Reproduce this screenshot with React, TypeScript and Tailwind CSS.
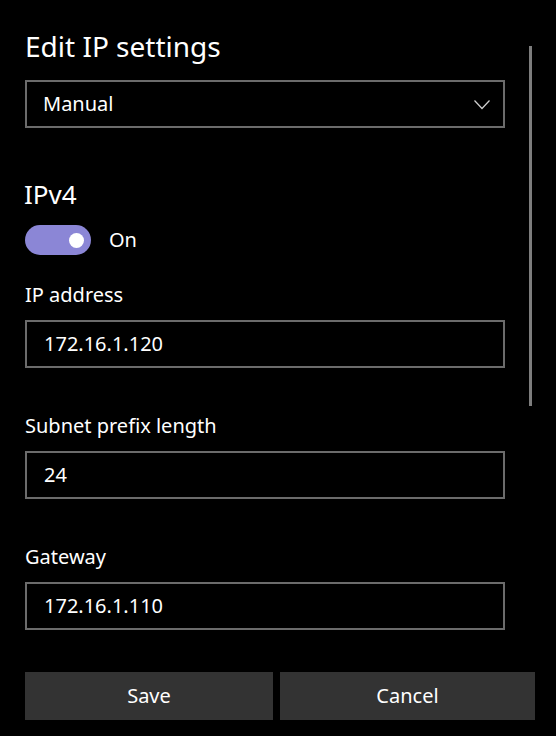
const Field = ({ label, value }: { label: string; value: string }) => (
	<div className="flex flex-col">
		<p className="text-[20px] leading-[28px] text-white">{label}</p>
		<div className="mt-[11px] h-[48px] border-2 border-[#6b6b6b] flex items-center pl-[17px] text-[20px] text-white">
			{value}
		</div>
	</div>
);

export default function App() {
	return (
		<div
			className="relative w-[556px] h-[736px] bg-black overflow-hidden"
			style={{ fontFamily: '"Noto Sans", "Open Sans", sans-serif' }}
		>
			{/* scrollbar */}
			<div className="absolute left-[529px] top-[46px] w-[3px] h-[360px] bg-[#7d7d7d]" />

			<div className="flex flex-col pl-[25px] w-[505px]">
				<h1 className="mt-[26px] text-[28px] leading-[40px] text-white">Edit IP settings</h1>

				<div className="mt-[14px] h-[48px] border-2 border-[#6b6b6b] flex items-center justify-between pl-[16px] pr-[13px] text-[20px] text-white">
					<span>Manual</span>
					<svg width="16" height="10" viewBox="0 0 16 10" fill="none" className="mt-[1px]">
						<polyline points="0.5,0.5 8,8.5 15.5,0.5" stroke="#d0d0d0" strokeWidth="1.2" />
					</svg>
				</div>

				<h2 className="mt-[48px] text-[26px] leading-[36px] text-white -ml-[1px]">IPv4</h2>

				<div className="mt-[13px] flex items-center gap-[18px]">
					<div className="w-[66px] h-[30px] rounded-full bg-[#8b86d6] flex items-center justify-end pr-[7px]">
						<div className="w-[15px] h-[15px] rounded-full bg-white" />
					</div>
					<span className="text-[20px] text-white">On</span>
				</div>

				<div className="mt-[26px] flex flex-col gap-[44px]">
					<Field label="IP address" value="172.16.1.120" />
					<Field label="Subnet prefix length" value="24" />
					<Field label="Gateway" value="172.16.1.110" />
				</div>

				<div className="mt-[42px] flex gap-[7px] w-[510px]">
					<button className="w-[248px] h-[48px] bg-[#333333] text-white text-[20px]">Save</button>
					<button className="flex-1 h-[48px] bg-[#333333] text-white text-[20px]">Cancel</button>
				</div>
			</div>
		</div>
	);
}
